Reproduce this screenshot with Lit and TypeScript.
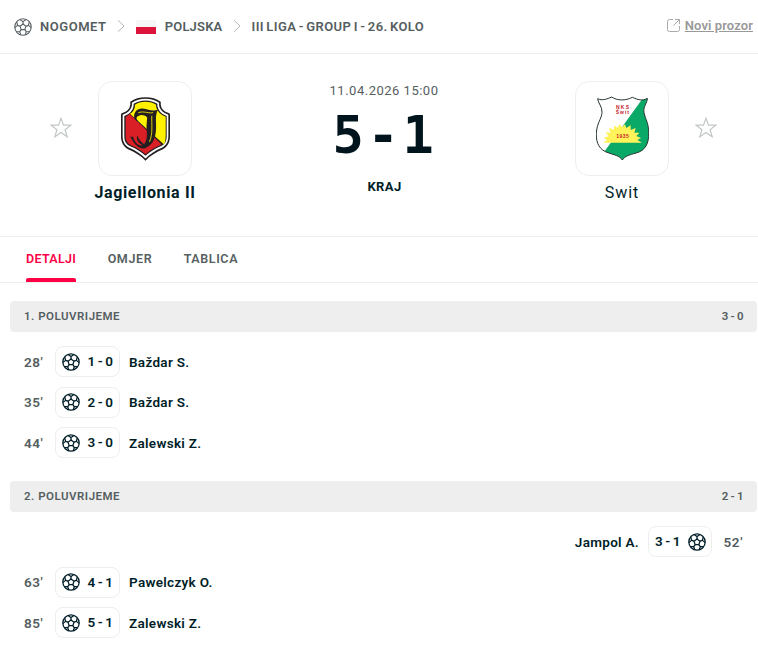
import { css, html, LitElement, svg } from 'lit';
import { customElement, property } from 'lit/decorators.js';

interface Goal {
  minute: string;
  score: string;
  player: string;
  away?: boolean;
}

interface Period {
  name: string;
  score: string;
  goals: Goal[];
}

const PERIODS: Period[] = [
  {
    name: '1. Poluvrijeme',
    score: '3 - 0',
    goals: [
      { minute: "28'", score: '1 - 0', player: 'Baždar S.' },
      { minute: "35'", score: '2 - 0', player: 'Baždar S.' },
      { minute: "44'", score: '3 - 0', player: 'Zalewski Z.' },
    ],
  },
  {
    name: '2. Poluvrijeme',
    score: '2 - 1',
    goals: [
      { minute: "52'", score: '3 - 1', player: 'Jampol A.', away: true },
      { minute: "63'", score: '4 - 1', player: 'Pawelczyk O.' },
      { minute: "85'", score: '5 - 1', player: 'Zalewski Z.' },
    ],
  },
];

const ball = svg`
  <circle cx="10" cy="10" r="9.1" />
  <path d="M10 6.7 13.3 9.1 12 12.9H8L6.7 9.1Z" />
  <path d="M10 6.7V4M13.3 9.1 16 8.2M12 12.9 13.7 15.2M8 12.9 6.3 15.2M6.7 9.1 4 8.2" />
  <path d="M6.6 1.7 10 4 13.4 1.7M17 4.3 16 8.2 19.1 10.7M17.3 15.2 13.7 15.2 12.4 18.8M7.6 18.8 6.3 15.2 2.7 15.2M.9 10.7 4 8.2 3 4.3" />
`;

const chevron = html`<svg class="chevron" viewBox="0 0 8 12"><path d="M1 .3 7 6 1 11.7" /></svg>`;

const star = html`
  <svg class="star" viewBox="0 0 20 20">
    <path d="M10 1.2 12.3 7.4H18.9L13.7 11.5 15.6 18 10 14.1 4.4 18 6.3 11.5 1.1 7.4H7.7Z" />
  </svg>
`;

const jagiellonia = html`
  <svg width="49" height="64" viewBox="93 63 148 192">
    <path fill="#231f20" d="M167 63C149 63 134 67 121 77V86Q119 104 97 111Q93 112 93 116V181C93 200 101 213 116 221C136 230 154 240 167 255C180 240 198 230 218 221C233 213 241 200 241 181V116Q241 112 237 111Q215 104 213 86V77C200 67 185 63 167 63Z" />
    <path fill="#fff" d="M167 68C151 68 138 72 126 80V88Q123 107 98 116V181C98 198 105 209 118 216C138 225 155 236 167 248C179 236 196 225 216 216C229 209 236 198 236 181V116Q211 107 208 88V80C196 72 183 68 167 68Z" />
    <path fill="#231f20" d="M167 73C152 73 141 77 131 83V90Q127 111 103 120V181C103 196 109 206 121 211C140 219 156 229 167 240C178 229 194 219 213 211C225 206 231 196 231 181V120Q207 111 203 90V83C193 77 182 73 167 73Z" />
    <path fill="#fff200" d="M167 77C154 77 143 80 135 86V92Q131 109 120 113L223 206Q228 196 228 181V122Q204 113 199 92V86C191 80 180 77 167 77Z" />
    <path fill="#da1f26" d="M119 114Q113 119 107 122V181C107 194 112 203 123 208C141 216 157 226 167 235C177 226 193 216 211 208L215 205Z" />
    <path fill="#231f20" d="M133 126C130 109 142 96 158 97C176 99 186 107 205 101C197 114 199 127 199 145C200 180 193 207 166 217C149 220 136 211 120 181C124 184 128 184 129 180C133 199 147 212 158 208C145 201 137 190 143 178C145 190 153 198 163 205C174 191 171 173 170 151L172 124C165 117 153 115 147 119C138 123 137 128 147 137C139 136 135 132 133 126Z" />
    <path class="cut" stroke="#fff200" d="M145 110C161 103 180 114 190 109M186 119C185 145 190 173 179 198" />
  </svg>
`;

const swit = html`
  <svg width="53" height="65" viewBox="93 61 159 195">
    <defs>
      <clipPath id="shield">
        <path d="M98 69C112 76 126 70 140 64C156 75 181 76 202 65C218 72 232 77 247 68C247 82 234 92 237 111C241 131 251 141 251 171C252 202 242 225 213 232C193 238 181 240 172 253C164 240 148 238 132 232C103 224 93 202 94 174C95 142 110 130 111 110C112 92 99 83 98 69Z" />
      </clipPath>
    </defs>
    <g clip-path="url(#shield)">
      <path fill="#fff" d="M90 60H255V256H90Z" />
      <path fill="#0ba968" d="M239 60H256V256H100L120 225Z" />
      <path fill="#fff359" d="M114 201 126 194 116 186 131 182 121 170 137 171 131 156 147 162 147 149 158 157 163 145 171 155 180 146 184 157 197 149 197 163 212 157 208 171 223 171 214 181 228 187 217 193 231 201Z" />
    </g>
    <path fill="none" stroke="#26352f" stroke-width="3" d="M98 69C112 76 126 70 140 64C156 75 181 76 202 65C218 72 232 77 247 68C247 82 234 92 237 111C241 131 251 141 251 171C252 202 242 225 213 232C193 238 181 240 172 253C164 240 148 238 132 232C103 224 93 202 94 174C95 142 110 130 111 110C112 92 99 83 98 69Z" />
    <g class="crest-text">
      <text x="153" y="99" textLength="39">NKS</text>
      <text x="152" y="116" textLength="40">Świt</text>
      <text x="154" y="188" textLength="37">1935</text>
    </g>
  </svg>
`;

@customElement('goal-row')
export class GoalRow extends LitElement {

  @property({ attribute: false }) goal!: Goal;

  static get styles() {
    return css`
      .row {
        display: flex;
        align-items: center;
        height: 40.5px;
        padding: 0 14px;
        color: #001e28;
        font-size: 13.5px;
        font-weight: 600;
      }
      .away {
        flex-direction: row-reverse;
      }
      .minute {
        width: 31px;
        color: #555e61;
        letter-spacing: 0.6px;
      }
      .away .minute {
        text-align: right;
      }
      .chip {
        display: flex;
        align-items: center;
        justify-content: space-between;
        box-sizing: border-box;
        width: 65px;
        height: 31px;
        padding: 0 6px;
        border: 1px solid #eee;
        border-radius: 8px;
        word-spacing: -0.8px;
      }
      .chip span {
        margin-top: -1px;
      }
      .away .chip {
        flex-direction: row-reverse;
        width: 64px;
        padding-right: 5px;
      }
      .chip svg {
        width: 18px;
        height: 18px;
        fill: none;
        stroke: #001e28;
        stroke-width: 1.4;
      }
      .player {
        margin: 0 9px;
        letter-spacing: 0.3px;
      }
    `;
  }

  render() {
    const { minute, score, player, away } = this.goal;
    return html`
      <div class="row ${away ? 'away' : ''}">
        <div class="minute">${minute}</div>
        <div class="chip">
          <svg viewBox="0 0 20 20">${ball}</svg>
          <span>${score}</span>
        </div>
        <div class="player">${player}</div>
      </div>
    `;
  }
}

@customElement('app-root')
export class AppRoot extends LitElement {

  static get styles() {
    return css`
      :host {
        display: block;
        height: 658px;
        overflow: hidden;
        background: #fff;
        color: #555e61;
        font-family: Roboto, 'Liberation Sans', sans-serif;
      }
      .page {
        width: 767px;
      }
      svg {
        display: block;
        flex: none;
      }
      .header {
        display: flex;
        align-items: center;
        height: 53px;
        padding: 0 14px;
        border-bottom: 1px solid #eee;
        font-size: 13px;
        font-weight: 600;
      }
      .crumb {
        text-transform: uppercase;
        letter-spacing: 0.55px;
      }
      .country {
        letter-spacing: 0.2px;
      }
      .league {
        letter-spacing: 0.4px;
        word-spacing: -1.2px;
      }
      .ball {
        width: 18px;
        height: 18px;
        margin-right: 8px;
        fill: none;
        stroke: #555e61;
        stroke-width: 1.2;
      }
      .chevron {
        width: 8px;
        height: 12px;
        margin: -2px 11px 0 10px;
        fill: none;
        stroke: #b5b9ba;
      }
      .flag {
        width: 20px;
        height: 14px;
        margin-right: 9px;
        background: linear-gradient(#f6f6f6 50%, #dc143c 50%);
      }
      .popup {
        display: flex;
        align-items: center;
        gap: 5px;
        margin: -3px 0 0 auto;
        color: #999;
        font-size: 13px;
        letter-spacing: 0.1px;
        text-decoration: underline;
      }
      .popup svg {
        width: 13px;
        height: 14px;
        fill: none;
        stroke: #aaa;
      }
      .match {
        display: flex;
        justify-content: center;
        height: 182px;
        border-bottom: 1px solid #eee;
      }
      .side {
        display: flex;
        width: 168px;
        padding-top: 27px;
      }
      .star {
        width: 22px;
        height: 22px;
        margin-top: 36px;
        fill: none;
        stroke: #c2c6c7;
        stroke-width: 1.1;
      }
      .team {
        display: flex;
        flex-direction: column;
        align-items: center;
        width: 146px;
        gap: 7px;
        color: #001e28;
        font-size: 16px;
        letter-spacing: 1px;
      }
      .winner {
        font-weight: 700;
        letter-spacing: 0.65px;
      }
      .crest {
        display: flex;
        align-items: center;
        justify-content: center;
        box-sizing: border-box;
        width: 94px;
        height: 95px;
        border: 1px solid #eee;
        border-radius: 14px;
      }
      .cut {
        fill: none;
        stroke-width: 2.5;
      }
      .crest-text {
        fill: #c8232c;
        font: bold 15px 'Liberation Sans', sans-serif;
        letter-spacing: 0;
      }
      .result {
        display: flex;
        flex-direction: column;
        align-items: center;
        width: 331px;
        padding-top: 28px;
      }
      .date {
        padding-left: 1px;
        font-size: 13px;
        letter-spacing: 0.5px;
        line-height: 18px;
      }
      .score {
        color: #00141e;
        font: bold 52px/64px 'DejaVu Sans Mono', monospace;
        letter-spacing: 3.7px;
        margin: 3px 0 12px 3px;
      }
      .status {
        padding-left: 2px;
        color: #001e28;
        font-size: 13px;
        font-weight: 700;
        letter-spacing: 0.4px;
      }
      .tabs {
        display: flex;
        gap: 31.5px;
        height: 45px;
        padding-left: 26px;
        border-bottom: 1px solid #eee;
      }
      .tab {
        box-sizing: border-box;
        height: 45px;
        font-size: 12.5px;
        font-weight: 600;
        letter-spacing: 0.6px;
        line-height: 44px;
      }
      .active {
        color: #ff0046;
        letter-spacing: 0.3px;
      }
      .active::after {
        content: '';
        display: block;
        height: 4px;
        margin-top: -3px;
        border-radius: 2px 2px 0 0;
        background: #ff0046;
      }
      .periods {
        display: flex;
        flex-direction: column;
        gap: 18px;
        padding: 18px 10px 0;
      }
      .period-head {
        display: flex;
        align-items: center;
        justify-content: space-between;
        box-sizing: border-box;
        height: 31px;
        margin-bottom: 9.5px;
        padding: 0 13px 2px 14px;
        border-radius: 4px;
        background: #eee;
        font-size: 11.5px;
        font-weight: 600;
        letter-spacing: 0.5px;
        text-transform: uppercase;
      }
      .period-score {
        word-spacing: -1.6px;
      }
    `;
  }

  render() {
    return html`
      <div class="page">
        <div class="header">
          <svg class="ball" viewBox="0 0 20 20">${ball}</svg>
          <span class="crumb">Nogomet</span>
          ${chevron}
          <div class="flag"></div>
          <span class="crumb country">Poljska</span>
          ${chevron}
          <span class="crumb league">III Liga - Group I - 26. kolo</span>
          <div class="popup">
            <svg viewBox="0 0 13 14">
              <path d="M6 1.5H2.5Q.5 1.5.5 3.5V11.5Q.5 13.5 2.5 13.5H10.5Q12.5 13.5 12.5 11.5V8M8 1.5H12.5V6M12.5 1.5 6.5 7.5" />
            </svg>
            Novi prozor
          </div>
        </div>
        <div class="match">
          <div class="side">
            ${star}
            ${this.renderTeam('Jagiellonia II', jagiellonia, true)}
          </div>
          <div class="result">
            <div class="date">11.04.2026 15:00</div>
            <div class="score">5-1</div>
            <div class="status">KRAJ</div>
          </div>
          <div class="side">
            ${this.renderTeam('Swit', swit)}
            ${star}
          </div>
        </div>
        <div class="tabs">
          <div class="tab active">DETALJI</div>
          <div class="tab">OMJER</div>
          <div class="tab">TABLICA</div>
        </div>
        <div class="periods">
          ${PERIODS.map((period) => this.renderPeriod(period))}
        </div>
      </div>
    `;
  }

  renderTeam(name: string, crest: unknown, winner = false) {
    return html`
      <div class="team ${winner ? 'winner' : ''}">
        <div class="crest">${crest}</div>
        <div>${name}</div>
      </div>
    `;
  }

  renderPeriod(period: Period) {
    return html`
      <div>
        <div class="period-head">
          <span>${period.name}</span>
          <span class="period-score">${period.score}</span>
        </div>
        ${period.goals.map((goal) => html`<goal-row .goal=${goal}></goal-row>`)}
      </div>
    `;
  }
}
